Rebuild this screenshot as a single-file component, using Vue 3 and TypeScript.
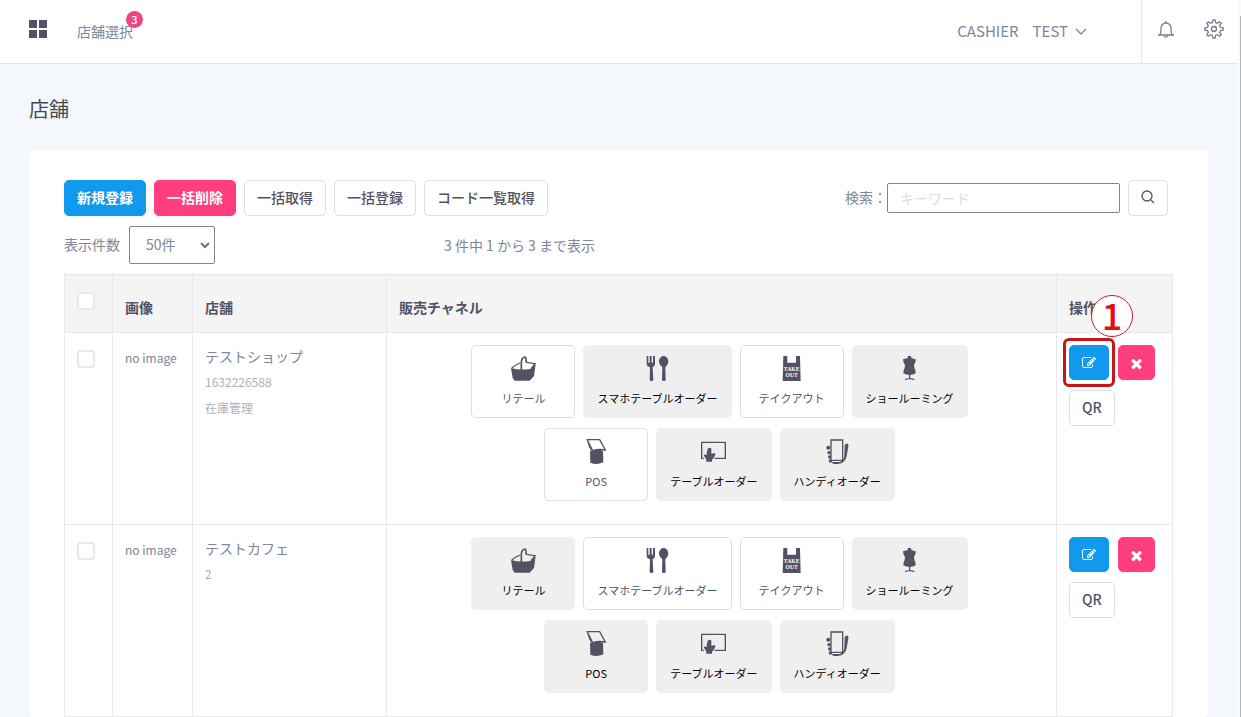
<script setup lang="ts">
import { ref } from 'vue'

type ChannelIcon = 'retail' | 'cutlery' | 'takeout' | 'showroom' | 'pos' | 'table' | 'handy'

interface Channel {
  icon: ChannelIcon
  label: string
}

interface Shop {
  id: number
  name: string
  notes: string[]
  active: ChannelIcon[]
  highlighted: boolean
}

const channelRows: Channel[][] = [
  [
    { icon: 'retail', label: 'リテール' },
    { icon: 'cutlery', label: 'スマホテーブルオーダー' },
    { icon: 'takeout', label: 'テイクアウト' },
    { icon: 'showroom', label: 'ショールーミング' },
  ],
  [
    { icon: 'pos', label: 'POS' },
    { icon: 'table', label: 'テーブルオーダー' },
    { icon: 'handy', label: 'ハンディオーダー' },
  ],
]

const shops: Shop[] = [
  { id: 1, name: 'テストショップ', notes: ['1632226588', '在庫管理'], active: ['retail', 'takeout', 'pos'], highlighted: true },
  { id: 2, name: 'テストカフェ', notes: ['2'], active: ['cutlery', 'takeout'], highlighted: false },
]

const pageSize = ref('50')
const keyword = ref('')

// Outline of an eight-toothed gear centred on (12, 12).
function gearPoints(teeth: number, outer: number, inner: number): string {
  const step = (Math.PI * 2) / teeth
  const corners: string[] = []
  for (let i = 0; i < teeth; i++) {
    const centre = i * step
    const shape: [number, number][] = [[-0.34, inner], [-0.17, outer], [0.17, outer], [0.34, inner]]
    for (const [offset, radius] of shape) {
      const angle = centre + offset * step * 0.9
      corners.push(`${(12 + radius * Math.cos(angle)).toFixed(2)},${(12 + radius * Math.sin(angle)).toFixed(2)}`)
    }
  }
  return corners.join(' ')
}
const gear = gearPoints(8, 11, 8)
</script>

<template>
  <div class="page">
    <div class="content">
      <header class="topbar">
        <button class="plain" type="button" aria-label="メニュー">
          <svg class="grid-icon" viewBox="0 0 18 18" width="18" height="18">
            <path d="M0 0h8v8H0zM10 0h8v8h-8zM0 10h8v8H0zM10 10h8v8h-8z" />
          </svg>
        </button>
        <a class="shop-select" href="#">店舗選択<span class="badge">3</span></a>
        <button class="plain user" type="button">
          <span>CASHIER</span><span>TEST</span>
          <svg viewBox="0 0 12 8" width="12" height="8" class="line"><path d="M1 1l5 5 5-5" /></svg>
        </button>
        <div class="tools">
          <button class="plain" type="button" aria-label="お知らせ">
            <svg viewBox="0 0 18 18" width="18" height="18" class="line">
              <path d="M1 15h16M3 15c1-2 1-3 1-7a5 5 0 0 1 10 0c0 4 0 5 1 7M9 1v2M7 16c1 1.500 3 1.500 4 0" />
            </svg>
          </button>
          <button class="plain" type="button" aria-label="設定">
            <svg viewBox="0 0 24 24" width="20" height="20" class="line gear">
              <polygon :points="gear" />
              <circle cx="12" cy="12" r="3" />
            </svg>
          </button>
        </div>
      </header>

      <main>
        <h1>店舗</h1>
        <section class="card">
          <div class="toolbar">
            <button class="btn blue" type="button">新規登録</button>
            <button class="btn pink" type="button">一括削除</button>
            <button class="btn" type="button">一括取得</button>
            <button class="btn" type="button">一括登録</button>
            <button class="btn" type="button">コード一覧取得</button>
            <form class="search" @submit.prevent>
              <label for="keyword">検索：</label>
              <input id="keyword" v-model="keyword" type="text" placeholder="キーワード" />
              <button class="btn square" type="submit" aria-label="検索する">
                <svg viewBox="0 0 14 14" width="14" height="14" class="line dark">
                  <circle cx="6" cy="6" r="5" /><path d="M10 10l3 3" />
                </svg>
              </button>
            </form>
          </div>

          <div class="paging">
            <label for="page-size">表示件数</label>
            <div class="select">
              <select id="page-size" v-model="pageSize">
                <option value="50">50件</option>
              </select>
              <svg viewBox="0 0 10 8" width="10" height="8"><path d="M1 1l4 4 4-4" /></svg>
            </div>
            <p>3 件中 1 から 3 まで表示</p>
          </div>

          <table>
            <colgroup>
              <col class="c-check" /><col class="c-image" /><col class="c-shop" /><col /><col class="c-action" />
            </colgroup>
            <thead>
              <tr>
                <th class="check"><input type="checkbox" aria-label="すべて選択" /></th>
                <th>画像</th>
                <th>店舗</th>
                <th>販売チャネル</th>
                <th>操作</th>
              </tr>
            </thead>
            <tbody>
              <tr v-for="shop in shops" :key="shop.id">
                <td class="check"><input type="checkbox" :aria-label="shop.name" /></td>
                <td class="image">no image</td>
                <td>
                  <div class="name">{{ shop.name }}</div>
                  <div v-for="note in shop.notes" :key="note" class="note">{{ note }}</div>
                </td>
                <td>
                  <div class="channels">
                    <div v-for="(row, index) in channelRows" :key="index" class="channel-row">
                      <button
                        v-for="channel in row"
                        :key="channel.icon"
                        type="button"
                        class="channel"
                        :class="{ active: shop.active.includes(channel.icon) }"
                      >
                        <svg viewBox="0 0 75 75" width="25" height="25">
                          <g v-if="channel.icon === 'retail'">
                            <path d="M0 36Q30 44 60 38L74 24L69 60L56 74H11L5 66Z" />
                            <path class="stroke" d="M2 37Q12 27 27 21M46 19L72 23L60 38" />
                            <path class="stroke handle" d="M31 45V18Q32 5 42 3Q46 5 45 20" />
                          </g>
                          <g v-else-if="channel.icon === 'cutlery'">
                            <path d="M5 0h5v20h4V0h6v20h4V0h6v24q0 7-7 10l2 37q0 4-5 4h-1q-5 0-5-4l1-37q-10-3-10-10z" />
                            <path d="M56 0c8 0 14 8 14 16 0 7-4 14-9 17l1 38q0 4-5 4h-1q-5 0-5-4l1-38c-6-3-10-10-10-17C42 8 48 0 56 0z" />
                          </g>
                          <g v-else-if="channel.icon === 'takeout'">
                            <path d="M13 0h12v20h26V0h12l2 75H11z" />
                            <text x="38" y="46" text-anchor="middle">TAKE</text>
                            <text x="38" y="62" text-anchor="middle">OUT</text>
                          </g>
                          <g v-else-if="channel.icon === 'showroom'">
                            <path d="M33 0h9l1 6 13 4q1 9-5 17 0 8 4 15l1 10q-8 5-18 5t-19-5l1-10q4-7 4-15-6-8-6-17l14-4z" />
                            <path class="stroke" d="M38 55v14M25 72q2-4 13-4t13 4" />
                          </g>
                          <g v-else-if="channel.icon === 'pos'">
                            <path class="stroke" d="M10 2H47L64 33Q44 29 26 35Z" />
                            <path d="M8 1L26 36L22 35L15 24Z" />
                            <path d="M18 34Q24 40 30 34Q44 28 57 36L58 70Q38 79 19 71Z" />
                          </g>
                          <g v-else-if="channel.icon === 'table'">
                            <path class="stroke" d="M8 58H2V10H73V58H40" />
                            <path d="M25 27q5-2 6 3v14l10-1q4-3 0 9l-8 11v5H16v-6l-8-13q1-5 8 0l4-20q3-3 5-2z" />
                          </g>
                          <g v-else>
                            <path class="stroke" d="M18 3H53V64H18Z" />
                            <path d="M59 19q4-8 10-4 2 1 1 7l-5 30q-2 11-9 16-5 6-18 7H27q-5-1-8-6h25q12-3 14-17z" />
                            <circle cx="10" cy="26" r="6" /><circle cx="12" cy="41" r="5" />
                            <circle cx="14" cy="54" r="5" /><circle cx="16" cy="66" r="5" />
                          </g>
                        </svg>
                        <span>{{ channel.label }}</span>
                      </button>
                    </div>
                  </div>
                </td>
                <td>
                  <div class="actions">
                    <div class="edit">
                      <button class="btn blue icon" type="button" aria-label="編集">
                        <svg viewBox="0 0 1792 1792" width="14" height="14">
                          <path d="M888 1184l116-116-152-152-116 116v56h96v96h56zm440-720q-16-16-33 1l-350 350q-17 17-1 33t33-1l350-350q17-17 1-33zm80 594v190q0 119-84.500 203.500t-203.500 84.500h-832q-119 0-203.500-84.500t-84.500-203.500v-832q0-119 84.500-203.500t203.500-84.500h832q63 0 117 25 15 7 18 23 3 17-9 29l-49 49q-14 14-32 8-23-6-45-6h-832q-66 0-113 47t-47 113v832q0 66 47 113t113 47h832q66 0 113-47t47-113v-126q0-13 9-22l64-64q15-15 35-7t20 29zm-96-738l288 288-672 672h-288v-288zm444 132l-92 92-288-288 92-92q28-28 68-28t68 28l152 152q28 28 28 68t-28 68z" />
                        </svg>
                      </button>
                      <template v-if="shop.highlighted">
                        <span class="frame"></span>
                        <span class="step">1</span>
                      </template>
                    </div>
                    <button class="btn pink icon" type="button" aria-label="削除">
                      <svg viewBox="256 256 1280 1280" width="11" height="11">
                        <path d="M1490 1322q0 40-28 68l-136 136q-28 28-68 28t-68-28l-294-294-294 294q-28 28-68 28t-68-28l-136-136q-28-28-28-68t28-68l294-294-294-294q-28-28-28-68t28-68l136-136q28-28 68-28t68 28l294 294 294-294q28-28 68-28t68 28l136 136q28 28 28 68t-28 68l-294 294 294 294q28 28 28 68z" />
                      </svg>
                    </button>
                    <button class="btn" type="button">QR</button>
                  </div>
                </td>
              </tr>
            </tbody>
          </table>
        </section>
      </main>
    </div>
    <div class="scrollbar"><div class="thumb"></div></div>
  </div>
</template>

<style>
body {
  margin: 0;
}
</style>

<style scoped>
* {
  box-sizing: border-box;
}

.page {
  display: flex;
  height: 100vh;
  overflow: hidden;
  background: #f4f7fb;
  color: #80859b;
  font: 14px/24px "Noto Sans CJK JP", "Noto Sans", sans-serif;
}

.content {
  flex: 1;
  min-width: 0;
  display: flex;
  flex-direction: column;
}

.scrollbar {
  width: 3px;
  padding: 16px 0 0 2px;
  background: #fafafa;
}

.thumb {
  height: 100%;
  background: #b4b4b4;
}

button,
input,
select {
  margin: 0;
  font: inherit;
  color: inherit;
}

svg {
  display: block;
  fill: currentColor;
}

.line {
  fill: none;
  stroke: currentColor;
  stroke-width: 1.3;
}

.dark {
  color: #515365;
}

.plain {
  padding: 0;
  border: 0;
  background: none;
}

.topbar {
  display: flex;
  align-items: center;
  height: 64px;
  flex: none;
  padding-left: 29px;
  border-bottom: 1px solid #e3e6ec;
  background: #fff;
}

.grid-icon {
  margin-bottom: 6px;
  color: #515365;
}

.shop-select {
  position: relative;
  margin-left: 30px;
  padding-bottom: 2px;
  color: inherit;
  text-decoration: none;
}

.badge {
  position: absolute;
  top: -8px;
  right: -10px;
  width: 17px;
  height: 17px;
  border-radius: 50%;
  background: #f0437f;
  color: #fff;
  font-size: 11px;
  font-weight: 500;
  line-height: 16px;
  text-align: center;
}

.user {
  display: flex;
  align-items: center;
  gap: 14px;
  margin-left: auto;
  padding-bottom: 2px;
  font-size: 15px;
}

.user svg {
  margin: 2px 0 0 -7px;
}

.tools {
  display: flex;
  align-items: center;
  align-self: stretch;
  gap: 29px;
  margin-left: 54px;
  padding: 0 14px 5px 15px;
  border-left: 1px solid #e3e6ec;
  color: #777b8c;
}

.gear {
  stroke-width: 1.6;
}

main {
  flex: 1;
  display: flex;
  flex-direction: column;
  padding: 30px 30px 0 29px;
}

h1 {
  margin: 0 0 26px;
  color: #46474f;
  font-size: 20px;
  font-weight: 400;
  line-height: 30px;
}

.card {
  flex: 1;
  padding: 30px 35px 0;
  border-radius: 5px;
  background: #fff;
}

.toolbar {
  display: flex;
  gap: 8px;
}

.btn {
  height: 36px;
  padding: 0 12px 2px;
  border: 1px solid #dcdde2;
  border-radius: 5px;
  background: #fff;
  color: #515365;
  font-weight: 500;
  line-height: 20px;
  white-space: nowrap;
}

.blue {
  border-color: #1199ee;
  background: #1199ee;
  color: #fff;
  font-weight: 700;
}

.pink {
  border-color: #ff3d7f;
  background: #ff3d7f;
  color: #fff;
  font-weight: 700;
}

.search {
  display: flex;
  align-items: center;
  margin-left: auto;
  padding-right: 5px;
}

.search label,
.paging label {
  padding-bottom: 2px;
}

.search input {
  width: 233px;
  height: 30px;
  margin-right: 8px;
  padding: 0 12px;
  border: 1px solid #83848f;
  border-radius: 2px;
  background: #fff;
}

.search input::placeholder {
  color: #dcdcdf;
  opacity: 1;
}

.square {
  width: 40px;
}

.paging {
  display: flex;
  align-items: center;
  margin: 10px 0;
}

.select {
  position: relative;
  margin: 0 229px 0 9px;
}

.select select {
  width: 86px;
  height: 38px;
  padding: 0 16px 2px;
  border: 1px solid #83848f;
  border-radius: 2px;
  background: #fff;
  appearance: none;
}

.select svg {
  position: absolute;
  top: 16px;
  right: 5px;
  fill: none;
  stroke: #6d7080;
  stroke-width: 2;
  pointer-events: none;
}

p {
  margin: 0;
}

table {
  width: 100%;
  border-collapse: collapse;
  table-layout: fixed;
}

.c-check {
  width: 48px;
}

.c-image {
  width: 80px;
}

.c-shop {
  width: 194px;
}

.c-action {
  width: 116px;
}

th,
td {
  padding: 12px;
  border: 1px solid #e6e8ed;
  text-align: left;
  vertical-align: top;
}

th {
  height: 58px;
  padding: 20px 12px 12px;
  background: #f4f4f4;
  color: #515365;
  font-weight: 700;
}

td {
  height: 192px;
}

.check {
  padding: 17px 12px 0;
}

.check input {
  display: block;
  width: 18px;
  height: 18px;
  border: 2px solid #e6e8f2;
  border-radius: 3px;
  background: #fff;
  appearance: none;
}

.image,
.note {
  font-size: 12px;
}

.image {
  line-height: 26px;
  white-space: nowrap;
}

.name {
  margin-bottom: 2px;
  line-height: 22px;
}

.note {
  color: #b0b0b4;
  line-height: 26px;
}

.channels {
  display: flex;
  flex-direction: column;
  gap: 10px;
  padding-right: 4px;
}

.channel-row {
  display: flex;
  justify-content: center;
  gap: 8px;
}

.channel {
  display: flex;
  flex-direction: column;
  align-items: center;
  gap: 8px;
  min-width: 104px;
  padding: 10px 13px;
  border: 1px solid #efefef;
  border-radius: 5px;
  background: #efefef;
  color: #000;
  font-size: 11px;
  line-height: 18px;
  white-space: nowrap;
}

.channel.active {
  border-color: #dcdde2;
  background: #fff;
  color: #515358;
}

.channel svg {
  color: #515365;
}

.channel .stroke {
  fill: none;
  stroke: currentColor;
  stroke-width: 4;
}

.channel .handle {
  stroke-width: 5;
}

.channel text {
  fill: #fff;
  font: bold 17px "Liberation Serif", serif;
}

.actions {
  display: flex;
  flex-wrap: wrap;
  gap: 10px 9px;
}

.edit {
  position: relative;
  display: flex;
}

.icon {
  height: 35px;
  padding-bottom: 0;
}

.icon svg {
  margin-top: 1px;
}

.frame {
  position: absolute;
  inset: -7px -6px;
  border: 3px solid #c81518;
  border-radius: 6px;
  pointer-events: none;
}

.step {
  position: absolute;
  top: -50px;
  left: 22px;
  width: 42px;
  height: 42px;
  border: 1px solid #c8202a;
  border-radius: 50%;
  background: #fff;
  color: #e01018;
  font-size: 36px;
  font-weight: 500;
  line-height: 36px;
  text-align: center;
}
</style>
